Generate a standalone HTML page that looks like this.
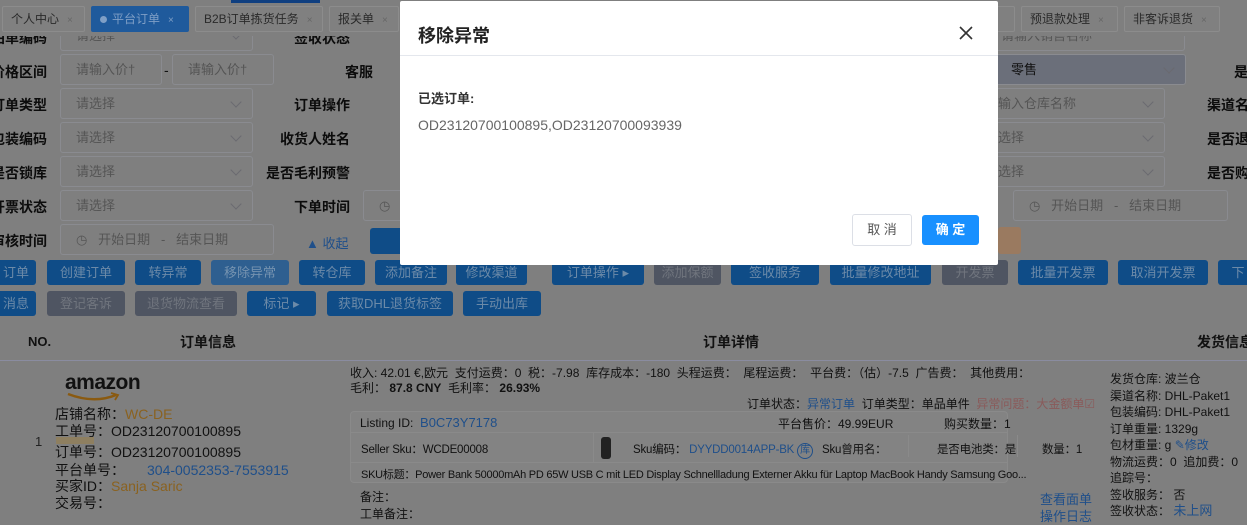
<!DOCTYPE html>
<html><head><meta charset="utf-8">
<style>
*{margin:0;padding:0;box-sizing:border-box}
body{width:1247px;height:521px;overflow:hidden;background:#7f7f7f;font-family:"Liberation Sans","Noto Sans CJK SC",sans-serif;font-size:13px;color:#111;position:relative}
.a{position:absolute;white-space:nowrap}
.tab{position:absolute;top:6px;height:26px;border:1px solid #8c8c8c;border-radius:2px;background:#808080;color:#2a2a2a;font-size:12px;line-height:24px;padding-left:8px;white-space:nowrap;z-index:2}
.tab i{font-style:normal;font-size:10px;color:#666;margin-left:8px}
.lab{position:absolute;font-weight:bold;font-size:14px;color:#0c0c0c;text-align:right;white-space:nowrap}
.in{position:absolute;height:31px;border:1px solid #8a8b90;border-radius:3px;color:#555;font-size:13px;line-height:29px;padding-left:15px;white-space:nowrap;overflow:hidden}
.in .ch{position:absolute;right:12px;top:9px;width:8px;height:8px;border-right:1px solid #6a6a70;border-bottom:1px solid #6a6a70;transform:rotate(45deg)}
.b{position:absolute;height:25px;border-radius:3px;background:#0f4c87;color:#6c8aa8;font-size:13px;line-height:25px;text-align:center;white-space:nowrap}
.g{background:#4f5562;color:#70757e}
.ln{position:absolute;font-size:13px;color:#111;white-space:nowrap}
.bl{color:#1f4f8a}.or{color:#8a6220}
.s{font-size:11.5px;letter-spacing:-0.2px}
.m{position:absolute;left:400px;top:1px;width:598px;height:264px;background:#fff;border-radius:2px;z-index:5}
</style></head><body>
<div class="a" style="left:0;top:0;width:1247px;height:36px;background:#7f7f7f;z-index:1"></div>
<div class="a" style="left:231px;top:0;width:89px;height:3px;background:#0f3f80;z-index:2"></div>
<!-- tabs -->
<div class="tab" style="left:2px;width:83px">个人中心<i>×</i></div>
<div class="tab" style="left:91px;width:98px;background:#1f5a9c;border-color:#1f5a9c;color:#7f9fc6"><span style="display:inline-block;width:7px;height:7px;border-radius:50%;background:#7f9fc6;margin-right:5px"></span>平台订单<i style="color:#7f9fc6">×</i></div>
<div class="tab" style="left:195px;width:128px">B2B订单拣货任务<i>×</i></div>
<div class="tab" style="left:329px;width:70px">报关单<i>×</i></div>
<div class="tab" style="left:990px;width:25px"></div>
<div class="tab" style="left:1021px;width:97px">预退款处理<i>×</i></div>
<div class="tab" style="left:1124px;width:96px">非客诉退货<i>×</i></div>
<!-- form -->
<div class="lab" style="left:-20px;top:28px;width:67px">拍单编码</div>
<div class="in" style="left:60px;top:20px;width:193px">请选择<span class="ch"></span></div>
<div class="lab" style="left:250px;top:28px;width:100px">签收状态</div>
<div class="in" style="left:985px;top:20px;width:200px">请输入销售名称</div>
<div class="lab" style="left:-20px;top:62px;width:67px">价格区间</div>
<div class="in" style="left:60px;top:54px;width:102px">请输入价†</div>
<div class="a" style="left:164px;top:62px;font-size:14px">-</div>
<div class="in" style="left:172px;top:54px;width:102px">请输入价†</div>
<div class="lab" style="left:300px;top:62px;width:73px">客服</div>
<div class="lab" style="left:-20px;top:95px;width:67px">订单类型</div>
<div class="in" style="left:60px;top:88px;width:193px">请选择<span class="ch"></span></div>
<div class="lab" style="left:250px;top:95px;width:100px">订单操作</div>
<div class="lab" style="left:-20px;top:129px;width:67px">包装编码</div>
<div class="in" style="left:60px;top:122px;width:193px">请选择<span class="ch"></span></div>
<div class="lab" style="left:250px;top:129px;width:100px">收货人姓名</div>
<div class="lab" style="left:-20px;top:163px;width:67px">是否锁库</div>
<div class="in" style="left:60px;top:156px;width:193px">请选择<span class="ch"></span></div>
<div class="lab" style="left:230px;top:163px;width:120px">是否毛利预警</div>
<div class="lab" style="left:-20px;top:197px;width:67px">开票状态</div>
<div class="in" style="left:60px;top:190px;width:193px">请选择<span class="ch"></span></div>
<div class="lab" style="left:250px;top:197px;width:100px">下单时间</div>
<div class="in" style="left:363px;top:190px;width:40px">◷</div>
<div class="lab" style="left:-20px;top:231px;width:67px">审核时间</div>
<div class="in" style="left:60px;top:224px;width:214px">◷&nbsp;&nbsp;&nbsp;开始日期&nbsp;&nbsp;&nbsp;-&nbsp;&nbsp;&nbsp;结束日期</div>
<div class="a" style="left:306px;top:233px;color:#1f4f8a;font-size:13px">▲ 收起</div>
<div class="a" style="left:370px;top:228px;width:40px;height:26px;background:#0f4c87;border-radius:3px"></div>
<div class="a" style="left:998px;top:227px;width:23px;height:27px;background:#9a7a60;border-radius:3px"></div>
<div class="in" style="left:985px;top:54px;width:201px;background:#6b6f7a;color:#111;padding-left:25px">零售<span class="ch"></span></div>
<div class="lab" style="left:1234px;top:62px">是</div>
<div class="in" style="left:985px;top:88px;width:180px;padding-left:12px">输入仓库名称<span class="ch"></span></div>
<div class="lab" style="left:1207px;top:95px">渠道名</div>
<div class="in" style="left:985px;top:122px;width:180px;padding-left:12px">选择<span class="ch"></span></div>
<div class="lab" style="left:1207px;top:129px">是否退</div>
<div class="in" style="left:985px;top:156px;width:180px;padding-left:12px">选择<span class="ch"></span></div>
<div class="lab" style="left:1207px;top:163px">是否购</div>
<div class="in" style="left:1013px;top:190px;width:215px">◷&nbsp;&nbsp;&nbsp;开始日期&nbsp;&nbsp;&nbsp;-&nbsp;&nbsp;&nbsp;结束日期</div>
<!-- buttons -->
<div class="b" style="left:-4px;top:260px;width:40px">订单</div>
<div class="b" style="left:47px;top:260px;width:78px">创建订单</div>
<div class="b" style="left:135px;top:260px;width:66px">转异常</div>
<div class="b" style="left:211px;top:260px;width:78px;background:#2e5f90;color:#7593b0">移除异常</div>
<div class="b" style="left:299px;top:260px;width:66px">转仓库</div>
<div class="b" style="left:375px;top:260px;width:72px">添加备注</div>
<div class="b" style="left:456px;top:260px;width:71px">修改渠道</div>
<div class="b" style="left:552px;top:260px;width:92px">订单操作 ▸</div>
<div class="b g" style="left:654px;top:260px;width:67px">添加保额</div>
<div class="b" style="left:731px;top:260px;width:88px">签收服务</div>
<div class="b" style="left:830px;top:260px;width:101px">批量修改地址</div>
<div class="b g" style="left:942px;top:260px;width:66px">开发票</div>
<div class="b" style="left:1018px;top:260px;width:90px">批量开发票</div>
<div class="b" style="left:1118px;top:260px;width:90px">取消开发票</div>
<div class="b" style="left:1218px;top:260px;width:40px">下</div>
<div class="b" style="left:-4px;top:291px;width:40px">消息</div>
<div class="b g" style="left:47px;top:291px;width:78px">登记客诉</div>
<div class="b g" style="left:135px;top:291px;width:102px">退货物流查看</div>
<div class="b" style="left:247px;top:291px;width:69px">标记 ▸</div>
<div class="b" style="left:327px;top:291px;width:126px">获取DHL退货标签</div>
<div class="b" style="left:463px;top:291px;width:78px">手动出库</div>
<!-- table header -->
<div class="a" style="left:0;top:360px;width:1247px;height:1px;background:#8a8ca0"></div>
<div class="a" style="left:28px;top:334px;font-weight:bold;font-size:13px">NO.</div>
<div class="a" style="left:180px;top:332px;font-weight:bold;font-size:14px">订单信息</div>
<div class="a" style="left:703px;top:332px;font-weight:bold;font-size:14px">订单详情</div>
<div class="a" style="left:1197px;top:332px;font-weight:bold;font-size:14px">发货信息</div>
<!-- row -->
<div class="a" style="left:35px;top:434px;color:#222">1</div>
<div class="a" style="left:65px;top:371px;font-weight:bold;font-size:21px;letter-spacing:-0.5px;color:#111">amazon</div>
<svg class="a" style="left:66px;top:392px" width="56" height="10"><path d="M2 2 Q28 12 50 3" stroke="#8a5a10" stroke-width="2.5" fill="none"/><path d="M45 1 L52 3 L49 8" stroke="#8a5a10" stroke-width="1.8" fill="none"/></svg>
<div class="ln" style="left:55px;top:404px;font-size:14px">店铺名称：<span class="or">WC-DE</span></div>
<div class="ln" style="left:55px;top:421px;font-size:14px">工单号：OD23120700100895</div>
<div class="a" style="left:56px;top:437px;width:38px;height:7px;background:#8e7f60"></div>
<div class="ln" style="left:55px;top:442px;font-size:14px">订单号：OD23120700100895</div>
<div class="ln" style="left:55px;top:460px;font-size:14px">平台单号：<span class="bl" style="margin-left:22px">304-0052353-7553915</span></div>
<div class="ln" style="left:55px;top:476px;font-size:14px">买家ID：<span class="or">Sanja Saric</span></div>
<div class="ln" style="left:55px;top:493px;font-size:14px">交易号：</div>
<div class="ln" style="left:350px;top:364px;font-size:12px">收入: 42.01 €,欧元&nbsp; 支付运费：0&nbsp; 税：-7.98&nbsp; 库存成本：-180&nbsp; 头程运费：&nbsp; 尾程运费：&nbsp; 平台费：（估）-7.5&nbsp; 广告费：&nbsp; 其他费用：</div>
<div class="ln" style="left:350px;top:379px;font-size:12px">毛利：&nbsp;<b>87.8 CNY</b>&nbsp; 毛利率：&nbsp;<b>26.93%</b></div>
<div class="ln" style="left:747px;top:395px;font-size:12px">订单状态：<span class="bl">异常订单</span>&nbsp; 订单类型：单品单件&nbsp; <span style="color:#8a5a5a">异常问题：大金额单☑</span></div>
<div class="a" style="left:350px;top:411px;width:658px;height:72px;background:#838383;border:1px solid #8a8a8a;border-radius:4px"></div>
<div class="a" style="left:351px;top:432px;width:656px;height:1px;background:#8a8a8a"></div>
<div class="a" style="left:351px;top:462px;width:656px;height:1px;background:#8a8a8a"></div>
<div class="ln" style="left:360px;top:415px;font-size:12px">Listing ID:&nbsp; <span class="bl" style="font-size:13px">B0C73Y7178</span></div>
<div class="ln" style="left:778px;top:415px;font-size:12px">平台售价：49.99EUR</div>
<div class="ln" style="left:944px;top:415px;font-size:12px">购买数量：1</div>
<div class="ln s" style="left:361px;top:441px">Seller Sku：WCDE00008</div>
<div class="a" style="left:593px;top:433px;width:1px;height:29px;background:#8a8a8a"></div>
<div class="a" style="left:601px;top:437px;width:10px;height:22px;background:#222;border-radius:3px"></div>
<div class="ln s" style="left:633px;top:441px">Sku编码：&nbsp;<span class="bl">DYYDD0014APP-BK</span> <span class="bl" style="display:inline-block;border:1px solid #1f4f8a;border-radius:50%;width:16px;height:16px;line-height:14px;text-align:center;font-size:10px;letter-spacing:0">库</span></div>
<div class="ln s" style="left:822px;top:441px">Sku曾用名：</div>
<div class="a" style="left:908px;top:435px;width:1px;height:22px;background:#8a8a8a"></div>
<div class="ln s" style="left:937px;top:441px">是否电池类：是</div>
<div class="a" style="left:1017px;top:435px;width:1px;height:22px;background:#8a8a8a"></div>
<div class="ln s" style="left:1042px;top:441px">数量：1</div>
<div class="ln" style="left:361px;top:466px;font-size:11px;letter-spacing:-0.25px">SKU标题：Power Bank 50000mAh PD 65W USB C mit LED Display Schnellladung Externer Akku für Laptop MacBook Handy Samsung Goo...</div>
<div class="ln" style="left:360px;top:488px;font-size:12px">备注：</div>
<div class="ln" style="left:360px;top:505px;font-size:12px">工单备注：</div>
<div class="ln bl" style="left:1040px;top:489px;font-size:13px">查看面单</div>
<div class="ln bl" style="left:1040px;top:506px;font-size:13px">操作日志</div>
<div class="ln" style="left:1110px;top:371px;font-size:12px;line-height:16.5px">发货仓库: 波兰仓<br>渠道名称: DHL-Paket1<br>包装编码: DHL-Paket1<br>订单重量: 1329g<br>包材重量: g <span class="bl">✎修改</span><br>物流运费：0&nbsp; 追加费：0<br>追踪号：<br>签收服务：&nbsp;否<br>签收状态：&nbsp;<span class="bl" style="font-size:13px">未上网</span></div>
<!-- modal -->
<div class="m">
<div class="a" style="left:18px;top:21px;font-size:18px;font-weight:bold;color:#222">移除异常</div>
<svg class="a" style="left:559px;top:25px" width="14" height="14"><path d="M1 1L13 13M13 1L1 13" stroke="#333" stroke-width="1.6"/></svg>
<div class="a" style="left:0;top:54px;width:598px;height:1px;background:#e4e7ed"></div>
<div class="a" style="left:18px;top:87px;font-weight:bold;font-size:13px;color:#333">已选订单:</div>
<div class="a" style="left:18px;top:116px;font-size:14px;color:#666">OD23120700100895,OD23120700093939</div>
<div class="a" style="left:452px;top:213px;width:60px;height:32px;border:1px solid #dcdfe6;border-radius:3px;font-size:13px;color:#555;text-align:center;line-height:30px">取 消</div>
<div class="a" style="left:522px;top:214px;width:57px;height:30px;background:#1890ff;border-radius:3px;font-size:13px;color:#fff;text-align:center;line-height:30px;font-weight:bold">确 定</div>
</div>
</body></html>
